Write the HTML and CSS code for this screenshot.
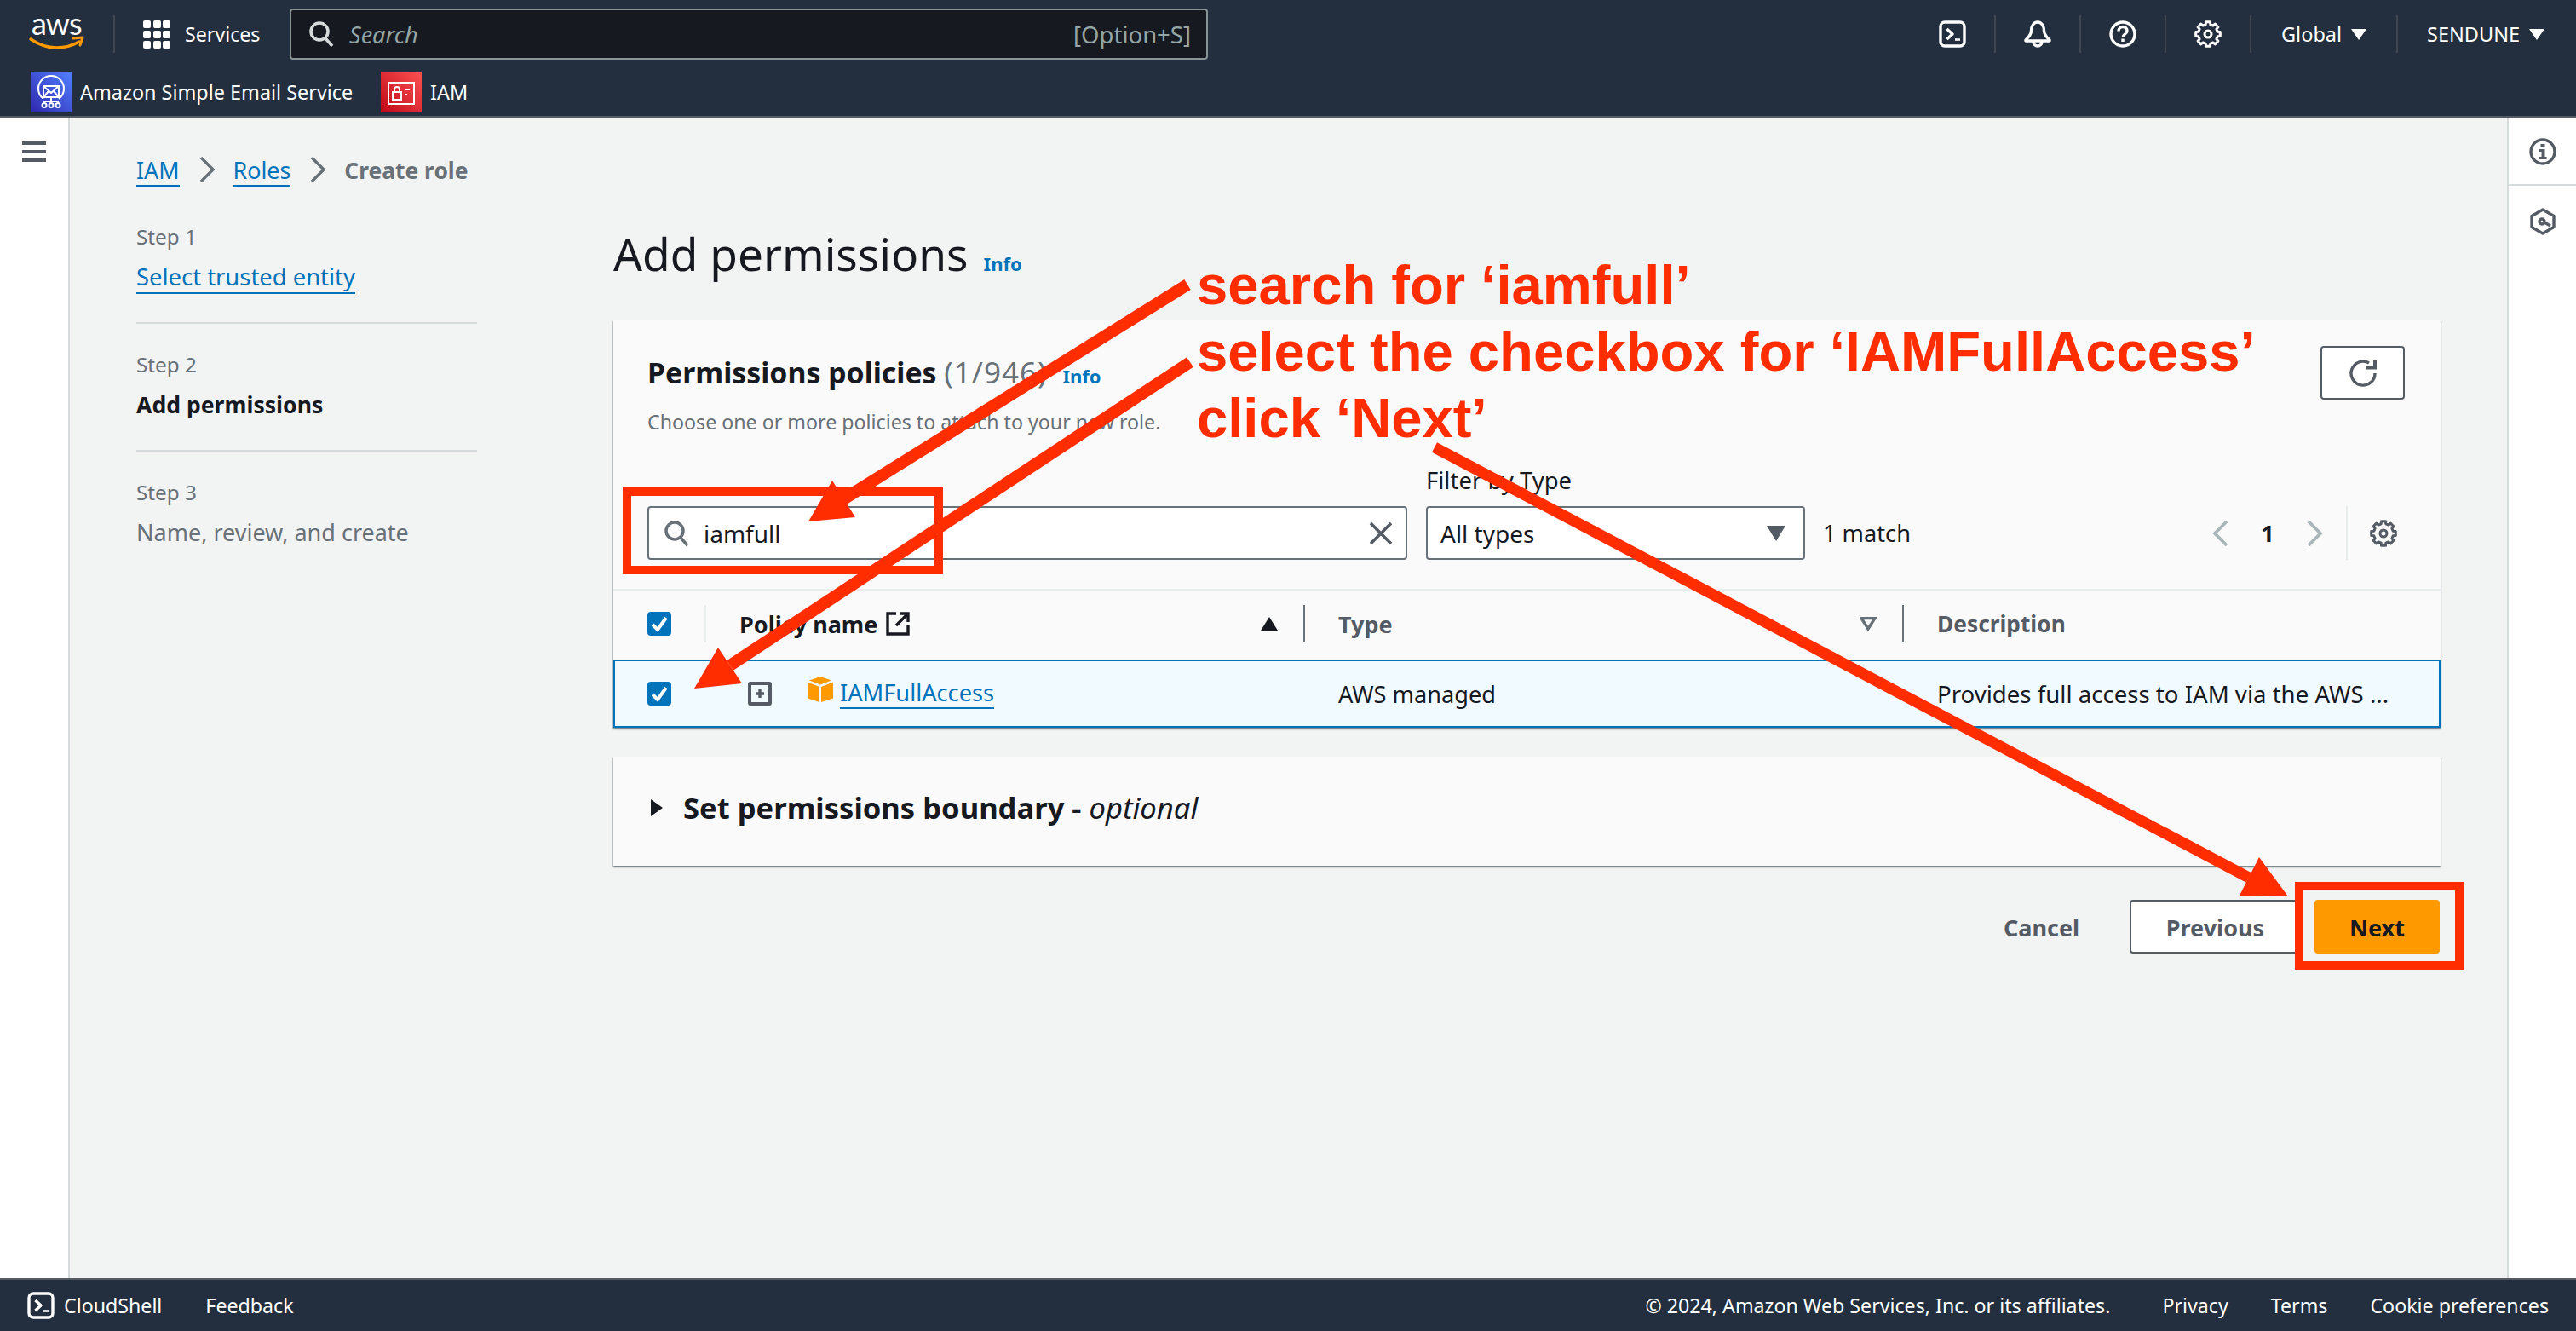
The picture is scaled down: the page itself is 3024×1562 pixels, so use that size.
FILE: index.html
```html
<!DOCTYPE html>
<html lang="en">
<head>
<meta charset="utf-8">
<title>Add permissions</title>
<link rel="stylesheet" href="styles.css">
</head>
<body>
<div class="page">
  <header class="topbar">
    <div class="nav-main">
      <a class="logo">
        <svg class="logo-svg" width="66" height="42" viewBox="0 0 66 42"><text x="3" y="22" class="logo-text">aws</text><path d="M2 27c9 6 19 10 30 10 10 0 20-3 27-7" fill="none" stroke="#f90" stroke-width="3.400" stroke-linecap="round"/><path d="M52 26l11-1-3 9" fill="none" stroke="#f90" stroke-width="3" stroke-linejoin="round" stroke-linecap="round"/></svg>
      </a>
      <span class="logo-sep"></span>
      <a class="services">
        <svg width="32" height="36" viewBox="0 0 32 36" fill="#fff"><rect x="0" y="2" width="9" height="9" rx="2"/><rect x="12" y="2" width="9" height="9" rx="2"/><rect x="23" y="2" width="9" height="9" rx="2"/><rect x="0" y="14" width="9" height="9" rx="2"/><rect x="12" y="14" width="9" height="9" rx="2"/><rect x="23" y="14" width="9" height="9" rx="2"/><rect x="0" y="26" width="9" height="9" rx="2"/><rect x="12" y="26" width="9" height="9" rx="2"/><rect x="23" y="26" width="9" height="9" rx="2"/></svg>
        <span>Services</span>
      </a>
      <div class="search">
        <svg width="30" height="32" viewBox="0 0 30 32" fill="none" stroke="#d5dbdb" stroke-width="3.500"><circle cx="13" cy="13" r="10"/><path d="M20 21l8 9"/></svg>
        <span class="search-hint">Search</span>
        <span class="search-key">[Option+S]</span>
      </div>
      <div class="nav-right">
        <a class="nav-icon"><svg width="32" height="32" viewBox="0 0 32 32" fill="none" stroke="#fff" stroke-width="3.400"><rect x="2" y="2" width="28" height="28" rx="5"/><path d="M9.500 10l6.500 6-6.500 6" stroke-linejoin="round"/><path d="M19 22.500h6" stroke-width="2.600"/></svg></a>
        <a class="nav-icon"><svg width="32" height="32" viewBox="0 0 32 32" fill="none" stroke="#fff" stroke-width="3.400" stroke-linejoin="round"><path d="M16 2c-5 0-7.500 5-7.500 10 0 5-3.500 8-6.500 11v1h28v-1c-3-3-6.500-6-6.500-11 0-5-2.500-10-7.500-10z"/><path d="M11 25a5 5 0 0 0 10 0"/></svg></a>
        <a class="nav-icon"><svg width="32" height="32" viewBox="0 0 32 32" fill="none" stroke="#fff" stroke-width="3.400"><circle cx="16" cy="16" r="14"/><path d="M11 12.500c0-3 2-5 5-5s5 2 5 4.500c0 4-5 4-5 8"/><path d="M16 21.500v3.500"/></svg></a>
        <a class="nav-icon"><svg width="32" height="32" viewBox="0 0 32 32" fill="none" stroke="#fff" stroke-width="3" stroke-linejoin="round"><polygon points="13.200,4.800 13.500,1.700 18.500,1.700 18.800,4.800 21.900,6.100 24.300,4.100 27.900,7.700 25.900,10.100 27.200,13.200 30.300,13.500 30.300,18.500 27.200,18.800 25.900,21.900 27.900,24.300 24.300,27.900 21.900,25.900 18.800,27.200 18.500,30.300 13.500,30.300 13.200,27.200 10.100,25.900 7.700,27.900 4.100,24.300 6.100,21.900 4.800,18.800 1.700,18.500 1.700,13.500 4.800,13.200 6.100,10.100 4.100,7.700 7.700,4.100 10.100,6.100"/><circle cx="16" cy="16" r="4"/></svg></a>
        <a class="nav-text nav-global">Global<span class="caret"></span></a>
        <a class="nav-text nav-user">SENDUNE<span class="caret"></span></a>
      </div>
    </div>
    <nav class="nav-fav">
      <a class="fav fav-ses">
        <svg class="svc" width="48" height="48" viewBox="0 0 48 48"><defs><linearGradient id="g-ses" x1="0" y1="1" x2="1" y2="0"><stop offset="0" stop-color="#2e27ad"/><stop offset="1" stop-color="#527fff"/></linearGradient></defs><rect width="48" height="48" fill="url(#g-ses)"/><g fill="none" stroke="#fff" stroke-width="2"><path d="M15 32a15 15 0 1 1 18 0"/><rect x="15" y="17" width="18" height="13"/><path d="M15 17l9 8 9-8M15 30l6-7M33 30l-6-7"/><path d="M24 30v5M16 35h16M16 35v2M32 35v2"/><circle cx="16" cy="39.500" r="2.500"/><circle cx="24" cy="39.500" r="2.500"/><circle cx="32" cy="39.500" r="2.500"/></g></svg>
        <span>Amazon Simple Email Service</span>
      </a>
      <a class="fav">
        <svg class="svc" width="48" height="48" viewBox="0 0 48 48"><defs><linearGradient id="g-iam" x1="0" y1="1" x2="1" y2="0"><stop offset="0" stop-color="#bd0816"/><stop offset="1" stop-color="#ff5252"/></linearGradient></defs><rect width="48" height="48" fill="url(#g-iam)"/><g fill="none" stroke="#fff" stroke-width="2"><rect x="9" y="13" width="30" height="25"/><rect x="14" y="24" width="10" height="9"/><path d="M16 24v-3a3 3 0 0 1 6 0v3M28 21h6M28 27h3"/></g></svg>
        <span>IAM</span>
      </a>
    </nav>
  </header>

  <div class="body-row">
    <aside class="nav-rail">
      <svg width="28" height="24" viewBox="0 0 28 24" fill="#545b64"><rect width="28" height="4"/><rect y="10" width="28" height="4"/><rect y="20" width="28" height="4"/></svg>
    </aside>

    <main class="content">
      <nav class="crumbs">
        <a class="link">IAM</a>
        <svg class="crumb-sep" width="18" height="30" viewBox="0 0 18 30" fill="none" stroke="#687078" stroke-width="3.400"><path d="M2 1l14 14L2 29"/></svg>
        <a class="link">Roles</a>
        <svg class="crumb-sep" width="18" height="30" viewBox="0 0 18 30" fill="none" stroke="#687078" stroke-width="3.400"><path d="M2 1l14 14L2 29"/></svg>
        <span class="crumb-now">Create role</span>
      </nav>

      <div class="wizard">
        <ol class="steps">
          <li class="step"><small>Step 1</small><a class="link">Select trusted entity</a></li>
          <li class="step"><small>Step 2</small><strong>Add permissions</strong></li>
          <li class="step step-last"><small>Step 3</small><span class="step-off">Name, review, and create</span></li>
        </ol>

        <section class="form">
          <div class="page-title"><h1>Add permissions</h1><a class="info">Info</a></div>

          <div class="card">
            <div class="card-head">
              <div class="head-top">
                <div>
                  <div class="card-title"><h2>Permissions policies <span class="count">(1/946)</span></h2><a class="info">Info</a></div>
                  <p class="card-desc">Choose one or more policies to attach to your new role.</p>
                </div>
                <button class="btn-refresh"><svg width="32" height="32" viewBox="0 0 32 32" fill="none" stroke="#545b64" stroke-width="3.400"><path d="M30 16A14 14 0 1 1 23 4"/><path d="M20 9.500h10V1" stroke-width="4"/></svg></button>
              </div>
              <div class="filters">
                <div class="input">
                  <svg width="30" height="32" viewBox="0 0 30 32" fill="none" stroke="#687078" stroke-width="3.500"><circle cx="13" cy="13" r="10"/><path d="M20 21l8 9"/></svg>
                  <span class="input-val">iamfull</span>
                  <svg class="input-x" width="28" height="28" viewBox="0 0 28 28" fill="none" stroke="#545b64" stroke-width="3.600"><path d="M2 2l24 24M26 2L2 26"/></svg>
                </div>
                <div class="field">
                  <label>Filter by Type</label>
                  <div class="select"><span>All types</span><svg width="22" height="18" viewBox="0 0 22 18" fill="#545b64"><path d="M0 0h22L11 18z"/></svg></div>
                </div>
                <span class="matches">1 match</span>
                <div class="pager">
                  <svg width="20" height="30" viewBox="0 0 20 30" fill="none" stroke="#aab7b8" stroke-width="3.800"><path d="M18 1L4 15l14 14"/></svg>
                  <b>1</b>
                  <svg width="20" height="30" viewBox="0 0 20 30" fill="none" stroke="#aab7b8" stroke-width="3.800"><path d="M2 1l14 14L2 29"/></svg>
                  <span class="pager-sep"></span>
                  <svg width="32" height="32" viewBox="0 0 32 32" fill="none" stroke="#545b64" stroke-width="3" stroke-linejoin="round"><polygon points="13.200,4.800 13.500,1.700 18.500,1.700 18.800,4.800 21.900,6.100 24.300,4.100 27.900,7.700 25.900,10.100 27.200,13.200 30.300,13.500 30.300,18.500 27.200,18.800 25.900,21.900 27.900,24.300 24.300,27.900 21.900,25.900 18.800,27.200 18.500,30.300 13.500,30.300 13.200,27.200 10.100,25.900 7.700,27.900 4.100,24.300 6.100,21.900 4.800,18.800 1.700,18.500 1.700,13.500 4.800,13.200 6.100,10.100 4.100,7.700 7.700,4.100 10.100,6.100"/><circle cx="16" cy="16" r="4"/></svg>
                </div>
              </div>
            </div>

            <div class="thead">
              <div class="th th-check"><span class="check"><svg width="28" height="28" viewBox="0 0 28 28" fill="none" stroke="#fff" stroke-width="4"><path d="M6 15l6 6 10-14"/></svg></span></div>
              <div class="th th-first th-name">
                <span class="th-label">Policy name</span>
                <svg class="ext" width="28" height="28" viewBox="0 0 28 28" fill="none" stroke="#16191f" stroke-width="3.400"><path d="M12 2H2v24h24V16M16 2h10v10M26 2L12 16"/></svg>
                <svg class="sort" width="20" height="16" viewBox="0 0 20 16" fill="#16191f"><path d="M10 0l10 16H0z"/></svg>
              </div>
              <div class="th th-type">
                <span>Type</span>
                <svg class="sort" width="20" height="16" viewBox="0 0 20 16" fill="none" stroke="#687078" stroke-width="3.400"><path d="M2 1.500h16L10 14z"/></svg>
              </div>
              <div class="th th-desc"><span>Description</span></div>
            </div>

            <div class="trow">
              <div class="td td-check"><span class="check"><svg width="28" height="28" viewBox="0 0 28 28" fill="none" stroke="#fff" stroke-width="4"><path d="M6 15l6 6 10-14"/></svg></span></div>
              <div class="td td-name">
                <svg width="28" height="28" viewBox="0 0 28 28"><rect x="2" y="2" width="24" height="24" fill="none" stroke="#545b64" stroke-width="4" rx="1"/><path d="M9 14h10M14 9v10" stroke="#545b64" stroke-width="3.400"/></svg>
                <svg class="cube" width="32" height="30" viewBox="0 0 32 30" fill="#f90"><path d="M16 0l13 4.500-13 5-13-5z"/><path d="M1 6.500l14 5.500v18L1 25.500z"/><path d="M31 6.500L17 12v18l14-4.500z"/></svg>
                <a class="link">IAMFullAccess</a>
              </div>
              <div class="td td-type">AWS managed</div>
              <div class="td td-desc">Provides full access to IAM via the AWS ...</div>
            </div>
          </div>

          <div class="card card-boundary">
            <svg width="14" height="20" viewBox="0 0 14 20" fill="#16191f"><path d="M0 0l14 10L0 20z"/></svg>
            <h2>Set permissions boundary - <i>optional</i></h2>
          </div>

          <div class="actions">
            <button class="btn btn-link">Cancel</button>
            <button class="btn btn-normal">Previous</button>
            <button class="btn btn-primary">Next</button>
          </div>
        </section>
      </div>
    </main>

    <aside class="tools-rail">
      <a class="tool tool-info"><svg width="32" height="32" viewBox="0 0 32 32"><circle cx="16" cy="16" r="14" fill="none" stroke="#545b64" stroke-width="3.400"/><path d="M13.500 7h5v4h-5zM11.500 13h7v9h2v3h-9v-3h3v-6h-3z" fill="#545b64"/></svg></a>
      <a class="tool tool-assist"><svg width="32" height="32" viewBox="0 0 32 32" fill="none" stroke="#545b64" stroke-width="3.400" stroke-linejoin="round"><path d="M16 2l13 7.500v13L16 30 3 22.500v-13z"/><circle cx="15" cy="16" r="3" /><path d="M16 16l9 5"/></svg></a>
    </aside>
  </div>

  <footer class="footer">
    <a class="foot-shell">
      <svg width="32" height="32" viewBox="0 0 32 32" fill="none" stroke="#fff" stroke-width="3.400"><rect x="2" y="2" width="28" height="28" rx="5"/><path d="M9.500 10l6.500 6-6.500 6" stroke-linejoin="round"/><path d="M19 22.500h6" stroke-width="2.600"/></svg>
      <span>CloudShell</span>
    </a>
    <a class="foot-feedback">Feedback</a>
    <div class="foot-right">
      <span>© 2024, Amazon Web Services, Inc. or its affiliates.</span>
      <a>Privacy</a>
      <a>Terms</a>
      <a>Cookie preferences</a>
    </div>
  </footer>

  <svg class="marks" width="3024" height="1562" viewBox="0 0 3024 1562">
    <g fill="none" stroke="#ff2d00" stroke-width="14">
      <path d="M1394 334L990 586"/>
      <path d="M1397 425L857 781"/>
      <path d="M1684 525L2640 1030" stroke-width="13"/>
    </g>
    <g fill="#ff2d00">
      <path d="M949 612L977 564 1004 607z"/>
      <path d="M815 808L843 760 871 802z"/>
      <path d="M2686 1052L2652 1006 2629 1051z"/>
    </g>
    <g fill="none" stroke="#ff2d00" stroke-width="10">
      <rect x="736" y="577" width="366" height="92"/>
      <rect x="2699" y="1040" width="188" height="93"/>
    </g>
  </svg>
  <div class="note">
    <div>search for ‘iamfull’</div>
    <div>select the checkbox for ‘IAMFullAccess’</div>
    <div>click ‘Next’</div>
  </div>
</div>
</body>
</html>
```
FILE: styles.css
```css
* { box-sizing: border-box; }
html, body { margin: 0; padding: 0; }
body { font-family: "Noto Sans", "Open Sans", sans-serif; font-size: 27px; color: #16191f; background: #fff; }
a { color: inherit; text-decoration: none; }
button { font: inherit; }
h1, h2, p, ol { margin: 0; padding: 0; }

.page { position: relative; width: 3024px; height: 1562px; overflow: hidden; display: flex; flex-direction: column; }

.topbar { height: 138px; flex: none; background: #232f3e; border-bottom: 2px solid #545b64; color: #fff; }
.nav-main { height: 80px; display: flex; align-items: center; padding-left: 34px; }
.logo { width: 66px; height: 42px; display: block; }
.logo-svg { overflow: visible; display: block; }
.logo-text { font-family: "Lato", sans-serif; font-size: 36px; fill: #fff; letter-spacing: -1px; }
.logo-sep { width: 2px; height: 44px; background: #414750; margin-left: 33px; }
.services { display: flex; align-items: center; gap: 17px; width: 172px; margin-left: 33px; font-size: 23.200px; white-space: nowrap; }
.search { width: 1078px; height: 60px; background: #16191f; border: 2px solid #879596; border-radius: 4px; display: flex; align-items: center; padding: 0 18px 0 20px; }
.search-hint { font-style: italic; color: #95a5a6; margin-left: 18px; font-size: 27px; }
.search-key { margin-left: auto; color: #95a5a6; font-size: 27.500px; }
.nav-right { margin-left: auto; display: flex; align-items: center; }
.nav-icon { width: 100px; height: 44px; border-right: 2px solid #414750; display: flex; align-items: center; justify-content: center; }
.nav-text { height: 44px; display: flex; align-items: center; font-size: 23.500px; }
.nav-global { width: 172px; padding-left: 35px; border-right: 2px solid #414750; }
.nav-user { width: 209px; padding-left: 34px; }
.caret { width: 0; height: 0; border-left: 9px solid transparent; border-right: 9px solid transparent; border-top: 13px solid #fff; margin-left: 11px; }

.nav-fav { height: 56px; display: flex; align-items: flex-start; padding: 4px 0 0 36px; font-size: 23.400px; }
.fav { display: flex; align-items: center; gap: 10px; height: 48px; white-space: nowrap; }
.fav-ses { width: 411px; }
.svc { flex: none; display: block; }

.body-row { flex: 1; display: flex; min-height: 0; }
.nav-rail { width: 82px; flex: none; background: #fff; border-right: 2px solid #d5dbdb; padding: 28px 0 0 26px; }
.nav-rail svg { display: block; }
.content { flex: 1; background: #f2f3f3; padding-left: 78px; }
.tools-rail { width: 81px; flex: none; background: #fff; border-left: 2px solid #d5dbdb; }
.tool { height: 80px; display: flex; align-items: center; justify-content: center; padding-top: 2px; }
.tool-info { border-bottom: 2px solid #d5dbdb; }
.tool-assist { padding-top: 4px; }

.link { color: #0073bb; border-bottom: 2px solid #0073bb; line-height: 34px; display: inline-block; white-space: nowrap; }
.crumbs { height: 37px; margin-top: 45px; display: flex; align-items: flex-start; font-size: 26.800px; }
.crumb-sep { margin: 1px 22px 0 23px; }
.crumb-now { color: #687078; font-weight: 700; line-height: 34px; font-size: 26.400px; }

.wizard { display: flex; gap: 160px; margin-top: 10px; }
.steps { list-style: none; width: 400px; flex: none; font-size: 27px; }
.step { height: 150px; padding-top: 28px; border-bottom: 2px solid #d5dbdb; display: flex; flex-direction: column; align-items: flex-start; }
.step small { display: block; font-size: 24.300px; line-height: 40px; color: #687078; margin-bottom: 9px; }
.step .link { line-height: 36px; font-size: 27.400px; }
.step strong { line-height: 36px; font-weight: 700; font-size: 26.600px; }
.step-off { color: #687078; line-height: 36px; }
.step-last { border-bottom: 0; }

.form { width: 2145px; flex: none; }
.page-title { display: flex; align-items: baseline; gap: 18px; height: 64px; margin-top: 36px; margin-bottom: 46px; }
h1 { font-size: 53.200px; font-weight: 400; line-height: 64px; }
.info { color: #0073bb; font-size: 22px; font-weight: 700; }

.card { background: #fafafa; box-shadow: 0 2px 2px 0 rgba(0, 28, 36, .3), 1px 1px 1px 0 rgba(0, 28, 36, .15), -1px 1px 1px 0 rgba(0, 28, 36, .15); }
.card-head { height: 317px; padding: 30px 51px 0 40px; border-bottom: 2px solid #eaeded; }
.head-top { display: flex; justify-content: space-between; }
.card-title { display: flex; align-items: baseline; gap: 18px; margin-top: 9px; height: 44px; }
h2 { font-size: 33.800px; font-weight: 700; line-height: 44px; }
.count { color: #687078; font-weight: 400; font-size: 35px; letter-spacing: 1px; }
.card-desc { font-size: 23.200px; line-height: 40px; color: #687078; margin: 16px 0 0; }
.btn-refresh { width: 99px; height: 63px; margin-right: -9px; background: #fff; border: 2px solid #545b64; border-radius: 4px; display: flex; align-items: center; justify-content: center; padding: 0; }

.filters { display: flex; align-items: flex-end; margin-top: 29px; height: 113px; }
.input { width: 892px; height: 63px; background: #fff; border: 2px solid #687078; border-radius: 4px; display: flex; align-items: center; padding: 0 15px 0 17px; }
.input-val { margin-left: 17px; font-size: 28px; }
.input-x { margin-left: auto; }
.field { margin-left: 22px; width: 445px; }
.field label { display: block; font-size: 27.500px; line-height: 40px; margin-bottom: 10px; }
.select { height: 63px; background: #fff; border: 2px solid #687078; border-radius: 4px; display: flex; align-items: center; justify-content: space-between; padding: 0 21px 0 15px; font-size: 28px; }
.matches { margin-left: 21px; line-height: 63px; font-size: 27.200px; }
.pager { margin-left: auto; display: flex; align-items: center; height: 63px; }
.pager b { width: 92px; text-align: center; font-weight: 700; font-size: 27px; }
.pager-sep { width: 2px; height: 63px; background: #eaeded; margin: 0 26px; }

.thead, .trow { display: grid; grid-template-columns: 107px 703px 703px 1fr; align-items: center; }
.thead { height: 81px; padding-bottom: 3px; }
.th { height: 44px; display: flex; align-items: center; padding-left: 39px; font-weight: 700; color: #545b64; border-left: 2px solid #687078; }
.th-check { border-left: 0; padding-left: 40px; }
.th-first { border-left-color: #eaeded; }
.th-name { color: #16191f; }
.th-desc { font-size: 26.300px; }
.ext { margin-left: 10px; }
.sort { margin-left: auto; margin-right: 30px; }
.trow { height: 80px; background: #f1faff; border: 2px solid #0073bb; margin: 0; }
.td { font-size: 27.600px; padding-left: 39px; white-space: nowrap; display: flex; align-items: center; }
.td-type { font-size: 27.200px; }
.td-check { padding-left: 38px; }
.td-name { padding-left: 49px; font-size: 27.200px; }
.cube { margin-left: 41px; margin-right: 7px; margin-top: -10px; }
.check { width: 28px; height: 28px; border-radius: 4px; background: #0073bb; display: block; }
.check svg { display: block; }

.card-boundary { height: 128px; margin-top: 34px; display: flex; align-items: center; gap: 24px; padding: 0 0 8px 44px; }
.card-boundary h2 { font-size: 34.600px; }
.card-boundary i { font-weight: 400; }

.actions { display: flex; justify-content: flex-end; gap: 16px; margin-top: 40px; padding-right: 1px; }
.btn { height: 63px; font-weight: 700; border-radius: 4px; padding: 2px 0 0; border: 2px solid transparent; font-size: 27px; }
.btn-link { width: 175px; background: transparent; color: #545b64; }
.btn-normal { width: 201px; background: #fff; border-color: #545b64; color: #545b64; }
.btn-primary { width: 147px; background: #ff9900; border-color: #ff9900; color: #16191f; }

.footer { height: 62px; flex: none; background: #232f3e; border-top: 2px solid #545b64; color: #fff; display: flex; align-items: center; padding: 0 32px; font-size: 23.200px; }
.foot-shell { display: flex; align-items: center; gap: 11px; }
.foot-feedback { margin-left: 51px; }
.foot-right { margin-left: auto; display: flex; gap: 50px; }
.foot-right span { margin-right: 11px; }

.marks { position: absolute; left: 0; top: 0; pointer-events: none; }
.note { position: absolute; left: 1405px; top: 296px; font-family: "Liberation Sans", Arial, sans-serif; font-weight: 700; font-size: 65.200px; line-height: 78px; color: #ff2d00; white-space: nowrap; }
```
